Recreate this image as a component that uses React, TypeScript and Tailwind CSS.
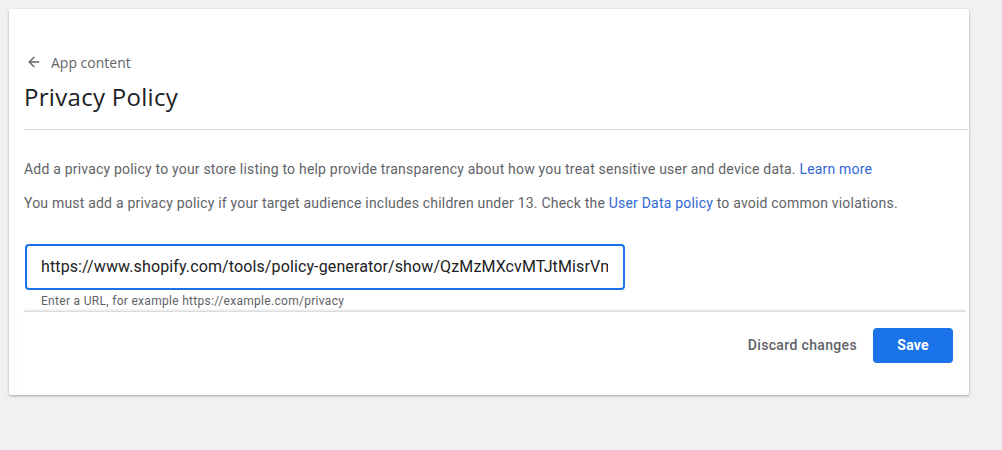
import { ArrowLeft } from 'lucide-react';

export default function App() {
  return (
    <div className="w-[1002px] h-[450px] bg-[#f1f1f1] pt-[9px] pl-[9px] font-['Roboto',sans-serif]">
      <div className="w-[960px] h-[386px] bg-white rounded-[2px] shadow-[0_1px_3px_rgba(60,64,67,0.3),0_1px_2px_rgba(60,64,67,0.15)] flex flex-col">
        <div className="ml-[15px] pt-[43px] pb-[16px] border-b border-[#dadce0]">
          <div className="flex items-center h-[20px] pl-[2px]">
            <ArrowLeft size={16} strokeWidth={2} className="text-[#5f6368]" />
            <span className="ml-[9px] text-[14px] font-medium text-[#5f6368] font-['Open_Sans',sans-serif]">App content</span>
          </div>
          <h1 className="mt-[9px] h-[32px] leading-[32px] text-[24px] text-[#202124] font-['Open_Sans',sans-serif] tracking-[0.3px]">
            Privacy Policy
          </h1>
        </div>

        <div className="ml-[15px] pt-[29px] flex-1">
          <p className="text-[14px] leading-[20px] text-[#5f6368] tracking-[0.2px]">
            Add a privacy policy to your store listing to help provide transparency about how you treat sensitive user and device data.{' '}
            <a className="text-[#3367d6]">Learn more</a>
          </p>
          <p className="mt-[14px] text-[14px] leading-[20px] text-[#5f6368] tracking-[0.2px]">
            You must add a privacy policy if your target audience includes children under 13. Check the{' '}
            <a className="text-[#3367d6]">User Data policy</a> to avoid common violations.
          </p>
          <div className="mt-[31px] ml-[1px] w-[600px] h-[46px] border-2 border-[#1a73e8] rounded-[4px] flex items-center pl-[14px] pr-[15px]">
            <span className="flex-1 min-w-0 text-[16px] text-[#202124] whitespace-nowrap overflow-hidden tracking-[0.12px]">
              https://www.shopify.com/tools/policy-generator/show/QzMzMXcvMTJtMisrVm
            </span>
          </div>
          <div className="mt-[3px] pl-[17px] text-[12px] leading-[16px] text-[#5f6368] tracking-[0.3px]">
            Enter a URL, for example https://example.com/privacy
          </div>
        </div>

        <div className="ml-[15px] mr-[3px] border-t border-[#dadce0] shadow-[0_-2px_2px_-1px_rgba(60,64,67,0.15)] h-[84px] flex items-start justify-end pt-[16px]">
          <button className="h-[35px] px-[16px] text-[14px] font-medium text-[#5f6368] tracking-[0.35px]">
            Discard changes
          </button>
          <button className="mr-[13px] h-[35px] w-[80px] rounded-[4px] bg-[#1a73e8] text-white text-[14px] font-bold tracking-[0.2px]">
            Save
          </button>
        </div>
      </div>
    </div>
  );
}
